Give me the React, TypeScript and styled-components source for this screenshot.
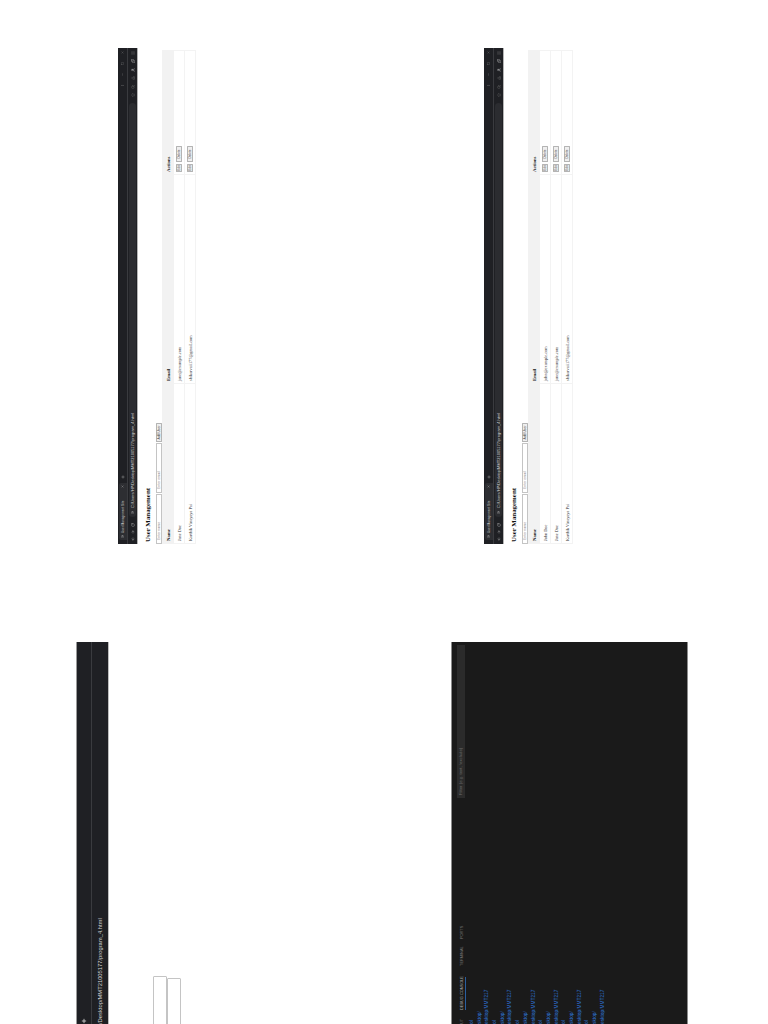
import React from 'react'
import styled, { createGlobalStyle } from 'styled-components'
import { ArrowLeft, ArrowRight, Download, Home, Info, Maximize2, Menu, Minus, MoreVertical, Plus, Puzzle, RotateCw, Search, Square, Star, User as UserIcon, X } from 'lucide-react'

const GlobalStyle = createGlobalStyle`
    html, body {
        margin: 0;
        padding: 0;
        background: #fff;
    }
    body {
        font-family: 'Liberation Serif', 'Times New Roman', serif;
        overflow: hidden;
    }
`

const Stage = styled.div`
    width: 768px;
    height: 1024px;
    overflow: hidden;
    background: #fff;
`

// the whole page of the document is a landscape sheet turned on its side
const Sheet = styled.div`
    width: 1024px;
    height: 768px;
    display: grid;
    grid-template-columns: 382px 496px;
    column-gap: 98px;
    transform-origin: 0 0;
    transform: translateY(1024px) rotate(-90deg);
`

const Column = styled.div<{ $top: number }>`
    display: flex;
    flex-direction: column;
    padding-top: ${(p) => p.$top}px;
    min-width: 0;
`

const Cropped = styled.div`
    height: 375px;
    overflow: hidden;
    background: #fff;
`

const CroppedBar = styled.div`
    height: 33px;
    background: #1f2024;
    border-top: 1px solid #9a9a9a;
    border-bottom: 1px solid #bdbdbd;
    box-sizing: border-box;
    display: flex;
    flex-direction: column;
`

const CroppedTabs = styled.div`
    height: 14px;
    display: flex;
    align-items: center;
    padding-left: 0;
    color: #e4e4e4;
    border-bottom: 1px solid #3a3b3f;
`

const CroppedUrl = styled.div`
    flex: 1;
    display: flex;
    align-items: center;
    font-family: 'Liberation Sans', Arial, sans-serif;
    font-size: 5.8px;
    color: #d4d4d4;
    white-space: nowrap;
`

const CroppedBody = styled.div`
    padding-top: 44px;
    display: flex;
    flex-direction: column;
`

const CroppedInput = styled.div<{ $width: number }>`
    width: ${(p) => p.$width}px;
    height: 14px;
    margin-left: -4px;
    box-sizing: border-box;
    border: 1px solid #c4c4c4;
    border-radius: 1px;
    background: #fff;
`

const Terminal = styled.div`
    height: 237px;
    box-sizing: border-box;
    padding: 5px 3px 0 0;
    background: #1a1a1a;
    border-top: 1px solid #8c8c8c;
    border-bottom: 1px solid #8c8c8c;
    display: flex;
    flex-direction: column;
    overflow: hidden;
`

const PanelTabs = styled.div`
    display: flex;
    align-items: flex-start;
    height: 11px;
`

const PanelTab = styled.span<{ $active?: boolean; $width: number; $left: number }>`
    width: ${(p) => p.$width}px;
    margin-left: ${(p) => p.$left}px;
    flex: none;
    height: 9px;
    box-sizing: border-box;
    padding-top: 2px;
    font-family: 'Liberation Sans', Arial, sans-serif;
    font-size: 3.9px;
    line-height: 5px;
    white-space: nowrap;
    color: ${(p) => (p.$active ? '#a8a8a8' : '#767676')};
    border-bottom: 1px solid ${(p) => (p.$active ? '#2b5f9e' : 'transparent')};
`

const FilterBox = styled.div`
    margin-left: auto;
    width: 153px;
    height: 8px;
    box-sizing: border-box;
    padding-left: 3px;
    background: #2b2b2b;
    font-family: 'Liberation Sans', Arial, sans-serif;
    font-size: 4.3px;
    line-height: 8px;
    color: #6c6c6c;
    white-space: nowrap;
`

const OutputLine = styled.div`
    height: 7.7px;
    font-family: 'Liberation Sans', Arial, sans-serif;
    font-size: 4.8px;
    line-height: 7.7px;
    color: #2e74d6;
    white-space: nowrap;
`

const Window = styled.section<{ $height: number }>`
    height: ${(p) => p.$height}px;
    display: flex;
    flex-direction: column;
    background: #fff;
`

const Chrome = styled.div`
    height: 20px;
    flex: none;
    display: flex;
    flex-direction: column;
    background: #1f2024;
    border-bottom: 1px solid #b5b5b5;
    box-sizing: border-box;
`

const TabStrip = styled.div`
    height: 9px;
    display: flex;
    align-items: center;
    padding: 0 3px 0 4px;
    color: #cfcfcf;
    border-bottom: 1px solid #3a3b3f;
`

const Tab = styled.div`
    width: 57px;
    height: 8px;
    display: flex;
    align-items: center;
    gap: 2px;
    padding: 0 2px;
    box-sizing: border-box;
    background: #2d2e32;
    border-radius: 2px 2px 0 0;
    font-family: 'Liberation Sans', Arial, sans-serif;
    font-size: 3.2px;
    white-space: nowrap;
`

const TabTitle = styled.span`
    flex: 1;
`

const TabNew = styled.span`
    display: flex;
    margin-left: 4px;
`

const WindowControls = styled.div`
    margin-left: auto;
    display: flex;
    gap: 8px;
    color: #8a8a8a;
`

const ToolBar = styled.div`
    flex: 1;
    display: flex;
    align-items: center;
    gap: 3px;
    padding: 0 3px 0 3px;
    color: #c8c8c8;
`

const AddressBar = styled.div`
    flex: 1;
    height: 7px;
    display: flex;
    align-items: center;
    gap: 3px;
    margin: 0 3px;
    padding-left: 3px;
    border-radius: 4px;
    background: #2b2c30;
    font-family: 'Liberation Sans', Arial, sans-serif;
    font-size: 4px;
    color: #d8d8d8;
    white-space: nowrap;
`

const ToolIcons = styled.div`
    display: flex;
    align-items: center;
    gap: 4.5px;
    color: #7c7c7c;
`

const BrightIcon = styled.span`
    display: flex;
    color: #f0f0f0;
`

const Page = styled.div`
    padding: 0 3px 0 0;
`

const Title = styled.h1`
    margin: 6px 0 0 2px;
    height: 12px;
    font-size: 6.9px;
    line-height: 8px;
    font-weight: bold;
    color: #111;
`

const FormRow = styled.div`
    display: flex;
    gap: 1px;
    height: 6px;
`

const TextInput = styled.input`
    width: 50px;
    height: 6px;
    box-sizing: border-box;
    margin: 0;
    padding: 0 0 0 3px;
    border: 0.5px solid #c4c4c4;
    font-family: 'Liberation Sans', Arial, sans-serif;
    font-size: 3.5px;
    outline: none;
    background: #fff;
    &::placeholder {
        color: #8a8a8a;
    }
`

const AddButton = styled.button`
    width: 19px;
    height: 6px;
    box-sizing: border-box;
    margin: 0;
    padding: 0;
    border: 0.5px solid #b4b4b4;
    border-radius: 0.5px;
    background: #efefef;
    font-family: 'Liberation Sans', Arial, sans-serif;
    font-size: 3.4px;
    line-height: 4px;
    color: #444;
`

const Table = styled.table`
    width: 493px;
    margin-top: 0;
    border-collapse: collapse;
    table-layout: fixed;
    font-size: 4.3px;
    color: #333;
`

const HeadCell = styled.th`
    height: 10px;
    padding: 0 2px;
    background: #f2f2f2;
    text-align: left;
    font-size: 4.8px;
    font-weight: bold;
    color: #111;
    border: 0.5px solid #f2f2f2;
`

const Cell = styled.td`
    height: 10px;
    padding: 0 2px;
    border: 0.5px solid #f3f3f3;
    white-space: nowrap;
`

const CellButton = styled.button<{ $width: number }>`
    height: 6px;
    box-sizing: border-box;
    margin: 0 2px 0 0;
    padding: 0;
    border: 0.5px solid #b4b4b4;
    border-radius: 0.5px;
    background: #efefef;
    font-family: 'Liberation Sans', Arial, sans-serif;
    font-size: 3.2px;
    line-height: 4px;
    color: #444;
    width: ${(p) => p.$width}px;
`

type User = { name: string; email: string }

const jane = { name: 'Jane Doe', email: 'jane@example.com' }
const john = { name: 'John Doe', email: 'john@example.com' }
const karthik = { name: 'Karthik Vinayaya Pai', email: 'shikarvaii177@gmail.com' }

const outputRows = Array.from({ length: 18 }, (_, i) => ['ol', 'sktop/', 'esktop/MMT217'][i % 3])

const BrowserWindow = ({ users, height }: { users: User[]; height: number }) => (
    <Window $height={height}>
        <Chrome>
            <TabStrip>
                <Tab>
                    <Info size={3} />
                    <TabTitle>User Management Site</TabTitle>
                    <X size={3} />
                </Tab>
                <TabNew>
                    <Plus size={4} />
                </TabNew>
                <WindowControls>
                    <MoreVertical size={3} />
                    <Minus size={3} />
                    <Square size={3} />
                    <X size={3} />
                </WindowControls>
            </TabStrip>
            <ToolBar>
                <ArrowLeft size={4} />
                <ArrowRight size={4} />
                <RotateCw size={4} />
                <AddressBar>
                    <Info size={3} />
                    C:/Users/HP/Desktop/MMT21005177/program_4.html
                </AddressBar>
                <ToolIcons>
                    <Star size={4} />
                    <Search size={4} />
                    <Download size={4} />
                    <BrightIcon>
                        <UserIcon size={4} />
                    </BrightIcon>
                    <BrightIcon>
                        <Puzzle size={4} />
                    </BrightIcon>
                    <Menu size={4} />
                </ToolIcons>
            </ToolBar>
        </Chrome>
        <Page>
            <Title>User Management</Title>
            <FormRow>
                <TextInput placeholder="Enter name" />
                <TextInput placeholder="Enter email" />
                <AddButton>Add User</AddButton>
            </FormRow>
            <Table>
                <colgroup>
                    <col width="160" />
                    <col width="209" />
                    <col width="124" />
                </colgroup>
                <thead>
                    <tr>
                        <HeadCell>Name</HeadCell>
                        <HeadCell>Email</HeadCell>
                        <HeadCell>Actions</HeadCell>
                    </tr>
                </thead>
                <tbody>
                    {users.map((user) => (
                        <tr key={user.email}>
                            <Cell>{user.name}</Cell>
                            <Cell>{user.email}</Cell>
                            <Cell>
                                <CellButton $width={8}>Edit</CellButton>
                                <CellButton $width={16}>Delete</CellButton>
                            </Cell>
                        </tr>
                    ))}
                </tbody>
            </Table>
        </Page>
    </Window>
)

const App = () => (
    <Stage>
        <GlobalStyle />
        <Sheet>
            <Column $top={76}>
                <Cropped>
                    <CroppedBar>
                        <CroppedTabs>
                            <Plus size={6} strokeWidth={3} />
                        </CroppedTabs>
                        <CroppedUrl>/Desktop/MMT21005177/program_4.html</CroppedUrl>
                    </CroppedBar>
                    <CroppedBody>
                        <CroppedInput $width={52} />
                        <CroppedInput $width={50} />
                    </CroppedBody>
                </Cropped>
                <Terminal>
                    <PanelTabs>
                        <PanelTab $width={6} $left={0}>UT</PanelTab>
                        <PanelTab $active $width={33} $left={8}>DEBUG CONSOLE</PanelTab>
                        <PanelTab $width={16} $left={11}>TERMINAL</PanelTab>
                        <PanelTab $width={12} $left={11}>PORTS</PanelTab>
                        <FilterBox>Filter (e.g. text, !exclude)</FilterBox>
                    </PanelTabs>
                    {outputRows.map((row, i) => (
                        <OutputLine key={i}>{row}</OutputLine>
                    ))}
                </Terminal>
            </Column>
            <Column $top={118}>
                <BrowserWindow users={[jane, karthik]} height={366} />
                <BrowserWindow users={[john, jane, karthik]} height={120} />
            </Column>
        </Sheet>
    </Stage>
)

export default App
